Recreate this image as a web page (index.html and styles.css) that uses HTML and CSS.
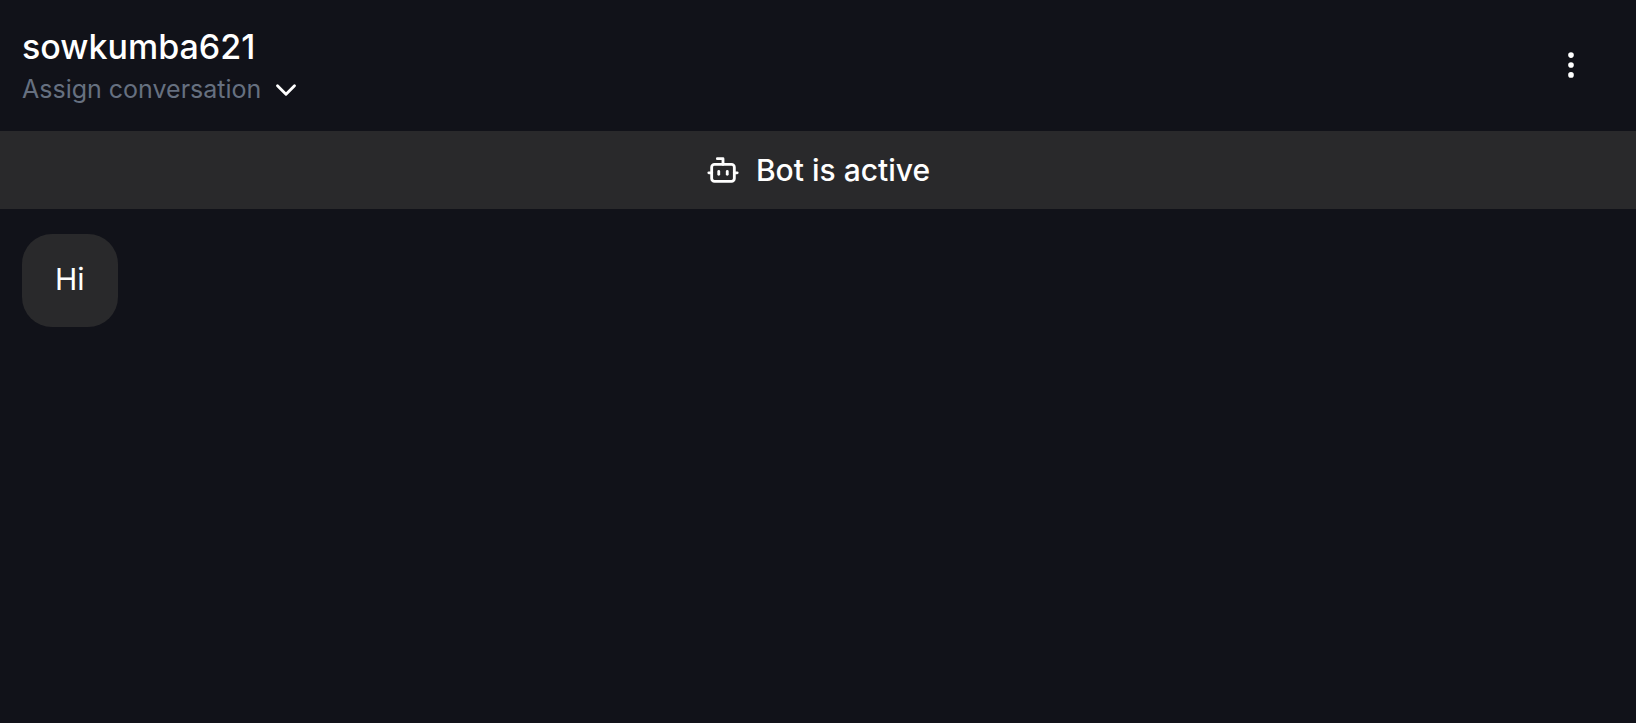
FILE: index.html
```html
<!DOCTYPE html>
<html lang="en">
<head>
    <meta charset="utf-8">
    <meta name="viewport" content="width=device-width, initial-scale=1">
    <title>Conversation</title>
    <link rel="stylesheet" href="styles.css">
</head>
<body>
    <header class="header">
        <div class="contact">
            <h1 class="name">sowkumba621</h1>
            <button class="assign" type="button">
                Assign conversation
                <svg class="icon" viewBox="0 0 24 24" aria-hidden="true">
                    <path d="m6 9 6 6 6-6"/>
                </svg>
            </button>
        </div>
        <button class="menu" type="button" aria-label="More options">
            <svg class="icon" viewBox="0 0 24 24" aria-hidden="true">
                <circle cx="12" cy="5" r="1"/>
                <circle cx="12" cy="12" r="1"/>
                <circle cx="12" cy="19" r="1"/>
            </svg>
        </button>
    </header>

    <div class="banner">
        <svg class="icon" viewBox="0 0 24 24" aria-hidden="true">
            <path d="M12 8V4H8"/>
            <rect width="16" height="12" x="4" y="8" rx="2"/>
            <path d="M2 14h2"/>
            <path d="M20 14h2"/>
            <path d="M15 13v2"/>
            <path d="M9 13v2"/>
        </svg>
        <span>Bot is active</span>
    </div>

    <main class="messages">
        <p class="bubble">Hi</p>
    </main>
</body>
</html>
```

FILE: styles.css
```css
body {
    margin: 0;
    min-height: 100vh;
    background-color: #111219;
    color: #fff;
    font-family: Inter, "Liberation Sans", sans-serif;
}

button {
    padding: 0;
    border: none;
    background: none;
    color: inherit;
    font-family: inherit;
    cursor: pointer;
}

.icon {
    width: 34px;
    height: 34px;
    flex-shrink: 0;
    fill: none;
    stroke: #fff;
    stroke-width: 2;
    stroke-linecap: round;
    stroke-linejoin: round;
}

.header {
    display: flex;
    align-items: center;
    justify-content: space-between;
    padding: 22px 48px 24px 22px;
}

.name {
    margin: 0;
    font-size: 34px;
    font-weight: 500;
    line-height: 50px;
}

.assign {
    display: flex;
    align-items: center;
    gap: 8px;
    color: #667080;
    font-size: 25px;
    line-height: 35px;
}

.menu {
    display: flex;
}

.banner {
    display: flex;
    align-items: center;
    justify-content: center;
    gap: 16px;
    padding: 18px;
    background-color: #29292b;
    font-size: 30px;
    font-weight: 500;
    line-height: 42px;
}

.messages {
    display: flex;
    flex-direction: column;
    align-items: flex-start;
    padding: 25px 22px;
}

.bubble {
    margin: 0;
    padding: 23px 33px 25px;
    border-radius: 30px;
    background-color: #29292b;
    font-size: 30px;
    line-height: 45px;
}
```
